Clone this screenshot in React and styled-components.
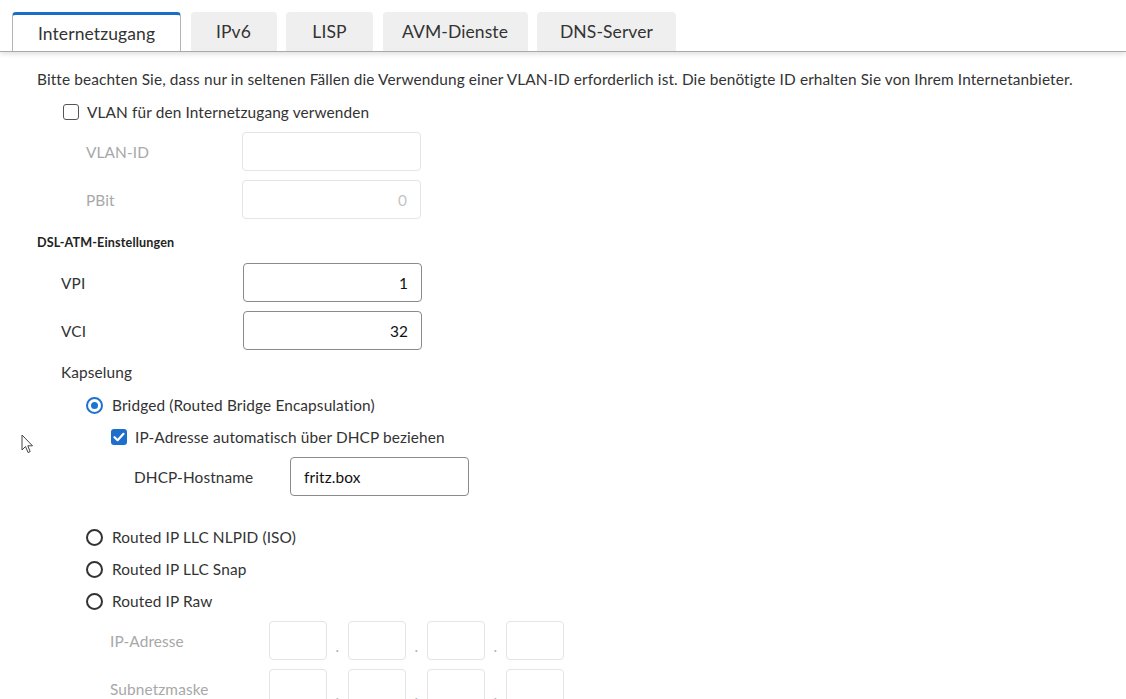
import React from 'react';
import styled, { createGlobalStyle } from 'styled-components';

const Global = createGlobalStyle`
  html, body { margin: 0; padding: 0; background: #fff; }
  body {
    font-family: Lato, "Noto Sans", sans-serif;
    color: #333;
    font-size: 15.4px;
    letter-spacing: 0.12px;
    overflow: hidden;
  }
`;

const Page = styled.div`
  width: 1126px;
  height: 699px;
  overflow: hidden;
  position: relative;
`;

const TabBar = styled.div`
  display: flex;
  align-items: flex-end;
  gap: 9.5px;
  height: 52px;
  box-sizing: border-box;
  padding: 12px 0 0 12px;
  border-bottom: 1px solid #a9a9a9;
  box-shadow: 0 2px 5px rgba(0, 0, 0, 0.13);
  background: #fff;
  position: relative;
  z-index: 1;
`;

const Tab = styled.div`
  width: ${p => p.$w}px;
  height: 39px;
  box-sizing: border-box;
  display: flex;
  align-items: center;
  justify-content: center;
  font-size: 17.5px;
  letter-spacing: 0.1px;
  color: #333;
  border-radius: 4px 4px 0 0;
  background: ${p => (p.$active ? '#fff' : '#efefef')};
  border-left: ${p => (p.$active ? '1px solid #b5b5b5' : 'none')};
  border-right: ${p => (p.$active ? '1px solid #b5b5b5' : 'none')};
  border-top: ${p => (p.$active ? '3px solid #1b6ec8' : 'none')};
`;

const Content = styled.div`
  padding: 17px 0 0 37px;
`;

const Note = styled.p`
  margin: 0;
  line-height: 20px;
`;

const CheckRow = styled.label`
  display: flex;
  align-items: center;
  gap: ${p => p.$gap || 8}px;
  height: 20px;
  margin-left: ${p => p.$indent}px;
  margin-top: ${p => p.$mt}px;
`;

const CheckBox = styled.span`
  width: 16px;
  height: 16px;
  box-sizing: border-box;
  border-radius: 3px;
  border: ${p => (p.$checked ? 'none' : '1.5px solid #555')};
  background: ${p => (p.$checked ? '#1e6fcc' : '#fff')};
  display: flex;
  align-items: center;
  justify-content: center;
`;

const Radio = styled.span`
  width: 17px;
  height: 17px;
  box-sizing: border-box;
  border-radius: 50%;
  border: 2px solid ${p => (p.$checked ? '#1e72d2' : '#333')};
  display: flex;
  align-items: center;
  justify-content: center;
  &::after {
    content: '';
    display: ${p => (p.$checked ? 'block' : 'none')};
    width: 7px;
    height: 7px;
    border-radius: 50%;
    background: #1e72d2;
  }
`;

const FieldRow = styled.div`
  display: grid;
  grid-template-columns: ${p => p.$labelW}px auto;
  align-items: center;
  margin-left: ${p => p.$indent}px;
  margin-top: ${p => p.$mt}px;
`;

const FieldLabel = styled.span`
  color: ${p => (p.$disabled ? '#a8a8a8' : '#333')};
`;

const TextInput = styled.input`
  width: ${p => p.$w || 179}px;
  height: 39px;
  box-sizing: border-box;
  border: 1px solid ${p => (p.disabled ? '#e4e4e4' : '#8a8a8a')};
  border-radius: 4px;
  background: #fff;
  padding: 0 13px;
  font-family: inherit;
  font-size: 15.4px;
  letter-spacing: 0.12px;
  color: ${p => (p.disabled ? '#c4c4c4' : '#111')};
  text-align: ${p => p.$align || 'right'};
  outline: none;
`;

const SectionHeading = styled.h4`
  margin: ${p => p.$mt}px 0 0 0;
  font-size: 12.6px;
  font-weight: 700;
  letter-spacing: 0.15px;
  line-height: 16px;
  color: #222;
`;

const PlainLabel = styled.div`
  margin-left: ${p => p.$indent}px;
  margin-top: ${p => p.$mt}px;
  line-height: 20px;
`;

const OctetGroup = styled.div`
  display: flex;
  align-items: center;
`;

const Dot = styled.span`
  width: 21px;
  text-align: center;
  color: #b0b0b0;
  padding-top: 10px;
`;

const Cursor = styled.svg`
  position: absolute;
  left: 21px;
  top: 434px;
`;

const tabs = [
  { label: 'Internetzugang', w: 169, active: true },
  { label: 'IPv6', w: 86 },
  { label: 'LISP', w: 87 },
  { label: 'AVM-Dienste', w: 145 },
  { label: 'DNS-Server', w: 139 },
];

const Check = () => (
  <svg width="12" height="10" viewBox="0 0 12 10">
    <path d="M1.5 5.2 L4.6 8.2 L10.5 1.8" fill="none" stroke="#fff" strokeWidth="2.2" strokeLinecap="round" strokeLinejoin="round" />
  </svg>
);

const IpField = ({ label, mt }) => (
  <FieldRow $labelW={159} $indent={73} $mt={mt}>
    <FieldLabel $disabled>{label}</FieldLabel>
    <OctetGroup>
      <TextInput disabled $w={58} defaultValue="" />
      <Dot>.</Dot>
      <TextInput disabled $w={58} defaultValue="" />
      <Dot>.</Dot>
      <TextInput disabled $w={58} defaultValue="" />
      <Dot>.</Dot>
      <TextInput disabled $w={58} defaultValue="" />
    </OctetGroup>
  </FieldRow>
);

export default function App() {
  return (
    <Page>
      <Global />
      <TabBar>
        {tabs.map(t => (
          <Tab key={t.label} $w={t.w} $active={t.active}>{t.label}</Tab>
        ))}
      </TabBar>
      <Content>
        <Note>
          Bitte beachten Sie, dass nur in seltenen Fällen die Verwendung einer VLAN-ID erforderlich ist. Die benötigte ID erhalten Sie von Ihrem Internetanbieter.
        </Note>
        <CheckRow $indent={26} $mt={13}>
          <CheckBox />
          VLAN für den Internetzugang verwenden
        </CheckRow>
        <FieldRow $labelW={156} $indent={49} $mt={10}>
          <FieldLabel $disabled>VLAN-ID</FieldLabel>
          <TextInput disabled defaultValue="" />
        </FieldRow>
        <FieldRow $labelW={156} $indent={49} $mt={9}>
          <FieldLabel $disabled>PBit</FieldLabel>
          <TextInput disabled defaultValue="0" />
        </FieldRow>

        <SectionHeading $mt={16}>DSL-ATM-Einstellungen</SectionHeading>
        <FieldRow $labelW={182} $indent={24} $mt={12}>
          <FieldLabel>VPI</FieldLabel>
          <TextInput readOnly defaultValue="1" />
        </FieldRow>
        <FieldRow $labelW={182} $indent={24} $mt={9}>
          <FieldLabel>VCI</FieldLabel>
          <TextInput readOnly defaultValue="32" />
        </FieldRow>
        <PlainLabel $indent={24} $mt={12}>Kapselung</PlainLabel>

        <CheckRow $indent={49} $mt={13} $gap={9}>
          <Radio $checked />
          Bridged (Routed Bridge Encapsulation)
        </CheckRow>
        <CheckRow $indent={74} $mt={12}>
          <CheckBox $checked><Check /></CheckBox>
          IP-Adresse automatisch über DHCP beziehen
        </CheckRow>
        <FieldRow $labelW={156} $indent={97} $mt={10}>
          <FieldLabel>DHCP-Hostname</FieldLabel>
          <TextInput readOnly $align="left" defaultValue="fritz.box" />
        </FieldRow>

        <CheckRow $indent={49} $mt={31} $gap={9}>
          <Radio />
          Routed IP LLC NLPID (ISO)
        </CheckRow>
        <CheckRow $indent={49} $mt={12} $gap={9}>
          <Radio />
          Routed IP LLC Snap
        </CheckRow>
        <CheckRow $indent={49} $mt={12} $gap={9}>
          <Radio />
          Routed IP Raw
        </CheckRow>
        <IpField label="IP-Adresse" mt={10} />
        <IpField label="Subnetzmaske" mt={9} />
      </Content>
      <Cursor width="13" height="20" viewBox="0 0 13 20">
        <path d="M1 1 L1 16 L4.5 12.5 L7 18.5 L9.2 17.6 L6.8 11.8 L11.5 11.8 Z" fill="#fff" stroke="#444" strokeWidth="1" strokeLinejoin="round" />
      </Cursor>
    </Page>
  );
}
